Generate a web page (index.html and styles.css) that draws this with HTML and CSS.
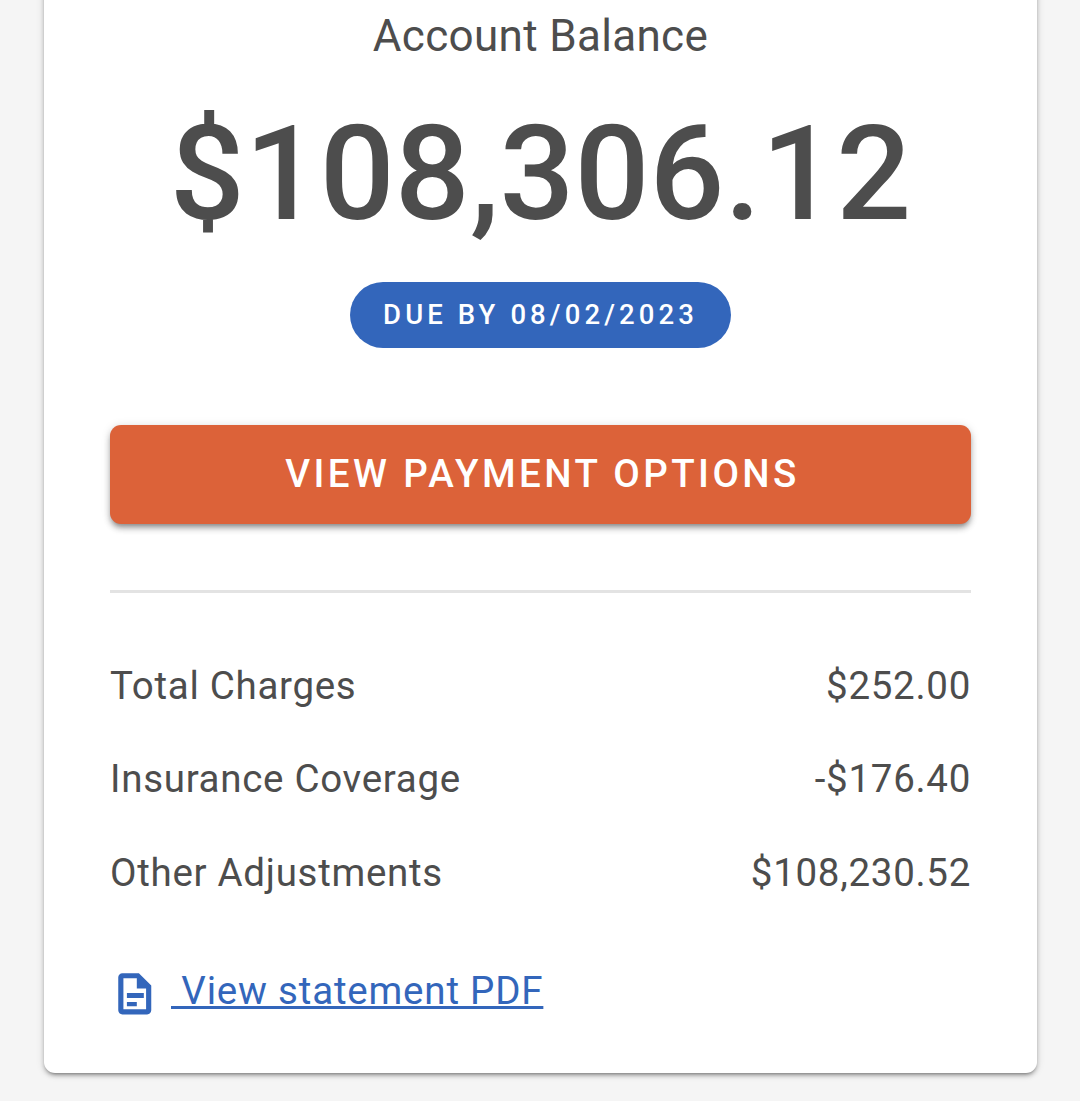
FILE: index.html
```html
<!DOCTYPE html>
<html lang="en">
<head>
    <meta charset="UTF-8">
    <title>Account Balance</title>
    <link rel="stylesheet" href="styles.css">
</head>
<body>
    <div class="card">
        <h2 class="title">Account Balance</h2>
        <div class="amount">$108,306.12</div>
        <div class="due-wrap">
            <span class="due">DUE BY 08/02/2023</span>
        </div>
        <button class="pay-btn">VIEW PAYMENT OPTIONS</button>
        <hr class="divider">
        <div class="row"><span>Total Charges</span><span>$252.00</span></div>
        <div class="row"><span>Insurance Coverage</span><span>-$176.40</span></div>
        <div class="row"><span>Other Adjustments</span><span>$108,230.52</span></div>
        <div class="pdf">
            <svg class="pdf-icon" viewBox="0 0 24 24" width="49.500" height="49.500">
                <path fill="#3366bb" fill-rule="evenodd" d="M6 2h8l6 6v12c0 1.100-.9 2-2 2H6c-1.100 0-2-.9-2-2V4c0-1.100.9-2 2-2zm.5 2.500v15h11v-10H13V4.500H6.500z"/>
                <path fill="#3366bb" d="M8.200 11.600h8.200V14H8.200zM8.200 16H13v2H8.200z"/>
            </svg>
            <a class="pdf-link" href="#">&nbsp;View statement PDF</a>
        </div>
    </div>
</body>
</html>
```

FILE: styles.css
```css
html, body {
    height: 100%;
}
body {
    margin: 0;
    padding: 0 43px 0 44px;
    background-color: #f5f5f5;
    font-family: Roboto, "Liberation Sans", sans-serif;
    color: #4d4d4d;
    overflow: hidden;
}
.card {
    background-color: white;
    border-radius: 11px;
    box-shadow: 0 3px 3px -2px rgba(0, 0, 0, 0.3), 0 3px 4px 0 rgba(0, 0, 0, 0.2), 0 1px 8px 0 rgba(0, 0, 0, 0.14);
    margin-top: -30px;
    padding: 38px 66px 54px;
}
.title {
    margin: 0;
    font-size: 44px;
    line-height: 56px;
    font-weight: 400;
    letter-spacing: 0.33px;
    text-align: center;
}
.amount {
    margin-top: 33px;
    font-size: 132px;
    line-height: 154px;
    font-weight: 500;
    text-align: center;
}
.due-wrap {
    display: flex;
    justify-content: center;
    margin-top: 31px;
}
.due {
    display: block;
    background-color: #3366bb;
    color: white;
    height: 66px;
    line-height: 66px;
    padding: 0 33px;
    border-radius: 33px;
    font-size: 27.5px;
    font-weight: 500;
    letter-spacing: 4.1px;
}
.pay-btn {
    display: block;
    width: 100%;
    height: 99px;
    margin-top: 77px;
    padding: 0 0 2px 4px;
    border: none;
    border-radius: 11px;
    background-color: #dc6239;
    color: white;
    font-family: inherit;
    font-size: 38.5px;
    font-weight: 500;
    letter-spacing: 3.4px;
    box-shadow: 0 4px 4px -2px rgba(0, 0, 0, 0.25), 0 5px 6px 0 rgba(0, 0, 0, 0.2), 0 1px 10px 0 rgba(0, 0, 0, 0.14);
}
.divider {
    margin: 66px 0 0;
    border: none;
    height: 3px;
    background-color: #e3e3e3;
}
.row {
    display: flex;
    justify-content: space-between;
    align-items: center;
    height: 93.5px;
    font-size: 38.5px;
    letter-spacing: 0.7px;
}
.divider + .row {
    margin-top: 45.7px;
}
.pdf {
    display: flex;
    align-items: center;
    margin-top: 44px;
}
.pdf-icon {
    display: block;
    margin-top: 6px;
    margin-right: 11.5px;
}
.pdf-link {
    color: #3366bb;
    font-size: 38.5px;
    letter-spacing: 0.8px;
}
```
